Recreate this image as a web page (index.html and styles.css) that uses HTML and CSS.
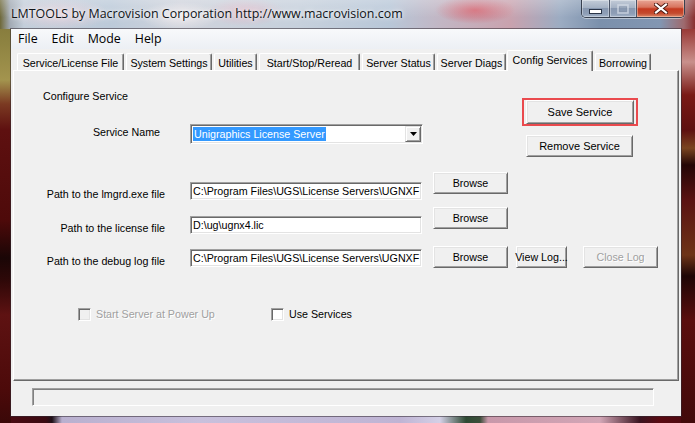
FILE: index.html
```html
<!DOCTYPE html>
<html>
<head>
<meta charset="utf-8">
<title>LMTOOLS</title>
<link rel="stylesheet" href="styles.css">
</head>
<body>
<div class="window">
  <div class="titlebar">
    <span class="title">LMTOOLS by Macrovision Corporation http://www.macrovision.com</span>
    <div class="caption-buttons">
      <span class="cbtn cbtn-min"><svg width="13" height="5" viewBox="0 0 13 5"><rect x="0.5" y="0.5" width="12" height="4" fill="#ffffff" stroke="#2b3548" stroke-width="1"/></svg></span>
      <span class="cbtn cbtn-max"><svg width="12" height="10" viewBox="0 0 12 10"><rect x="1" y="1" width="10" height="8" fill="none" stroke="#d9e0ea" stroke-width="1.6" opacity="0.7"/><rect x="2.5" y="3" width="7" height="4.5" fill="none" stroke="#8593a8" stroke-width="1" opacity="0.7"/></svg></span>
      <span class="cbtn cbtn-close"><svg width="14" height="11" viewBox="0 0 14 11"><path d="M2 1.5 L12 9.5 M12 1.5 L2 9.5" stroke="#4a1810" stroke-width="4" stroke-linecap="square"/><path d="M2 1.5 L12 9.5 M12 1.5 L2 9.5" stroke="#ffffff" stroke-width="2.2" stroke-linecap="square"/></svg></span>
    </div>
  </div>
  <div class="client">
    <div class="menubar">
      <span class="menu-item">File</span>
      <span class="menu-item">Edit</span>
      <span class="menu-item">Mode</span>
      <span class="menu-item">Help</span>
    </div>
    <div class="tabstrip">
      <span class="tab tab-1">Service/License File</span>
      <span class="tab tab-2">System Settings</span>
      <span class="tab tab-3">Utilities</span>
      <span class="tab tab-4">Start/Stop/Reread</span>
      <span class="tab tab-5">Server Status</span>
      <span class="tab tab-6">Server Diags</span>
      <span class="tab tab-7 tab-selected">Config Services</span>
      <span class="tab tab-8">Borrowing</span>
    </div>
    <div class="panel">
      <div class="top-section">
        <div class="top-left">
          <div class="section-title">Configure Service</div>
          <div class="field-row row-service">
            <span class="field-label label-service">Service Name</span>
            <div class="combo">
              <span class="combo-value">Unigraphics License Server</span>
              <span class="combo-btn"><svg width="7" height="4" viewBox="0 0 7 4"><path d="M0 0 H7 L3.5 4 Z" fill="#000"/></svg></span>
            </div>
          </div>
        </div>
        <div class="top-right">
          <div class="focus-ring"><span class="btn btn-save">Save Service</span></div>
          <span class="btn btn-remove">Remove Service</span>
        </div>
      </div>

      <div class="path-row row-lmgrd">
        <div class="field-row field-lmgrd">
          <span class="field-label">Path to the lmgrd.exe file</span>
          <div class="textbox">C:\Program Files\UGS\License Servers\UGNXF</div>
        </div>
        <span class="btn btn-browse">Browse</span>
      </div>

      <div class="path-row row-license">
        <div class="field-row field-license">
          <span class="field-label">Path to the license file</span>
          <div class="textbox">D:\ug\ugnx4.lic</div>
        </div>
        <span class="btn btn-browse">Browse</span>
      </div>

      <div class="path-row row-debug">
        <div class="field-row field-debug">
          <span class="field-label">Path to the debug log file</span>
          <div class="textbox">C:\Program Files\UGS\License Servers\UGNXF</div>
        </div>
        <span class="btn btn-browse">Browse</span>
        <span class="btn btn-viewlog">View Log...</span>
        <span class="btn btn-closelog btn-disabled">Close Log</span>
      </div>

      <div class="check-row">
        <span class="check-item check-disabled"><span class="checkbox"></span><span class="check-text">Start Server at Power Up</span></span>
        <span class="check-item"><span class="checkbox"></span><span class="check-text">Use Services</span></span>
      </div>
    </div>
    <div class="statusbar"></div>
  </div>
</div>
</body>
</html>
```

FILE: styles.css
```css
* { box-sizing: border-box; }
html, body { margin: 0; padding: 0; }
body {
  width: 695px;
  height: 423px;
  overflow: hidden;
  background: #3e0a0c;
  font-family: "Liberation Sans", Arial, sans-serif;
  font-size: 10.7px;
  color: #000;
}

.window {
  width: 695px;
  height: 423px;
  display: flex;
  flex-direction: column;
  padding: 0 14px 7px 11px;
  background:
    linear-gradient(to bottom, #7a7036 0px, #8f8442 45px, #a3944e 80px, #7b3a22 104px, #5e1010 130px, #4e0a0a 220px, #1a0606 258px, #2e0808 280px, #5e1212 315px, #4c0a0a 390px, #3a0808 423px) left top / 11px 423px no-repeat,
    linear-gradient(to bottom, #b06a66 0px, #9a3c38 30px, #c9908c 62px, #7a1a16 95px, #5e1010 130px, #7a4420 148px, #240606 165px, #5a1212 200px, #6e3418 255px, #1e0606 276px, #5a0e0e 320px, #420a0a 423px) right top / 14px 423px no-repeat,
    linear-gradient(to right, #4e0a12 0px, #3a0a12 46px, #1e1018 52px, #b9b0cf 62px, #c8c0dc 200px, #bfb4d4 400px, #d4d0e6 440px, #2e4a34 466px, #3c4e3a 480px, #c898aa 488px, #d2a6b6 600px, #3a1420 640px, #5a0a12 660px, #4a0a10 695px) left bottom / 695px 7px no-repeat,
    #4a0a0c;
}

/* ---------- title bar ---------- */
.titlebar {
  height: 29px;
  flex: none;
  margin: 0 -14px 0 -11px;
  padding: 0 12px 0 11px;
  display: flex;
  justify-content: space-between;
  align-items: flex-start;
  background:
    linear-gradient(to bottom, rgba(255,255,255,0.25), rgba(255,255,255,0) 60%),
    radial-gradient(ellipse 40px 14px at 475px 10px, rgba(214,96,108,0.85), rgba(214,96,108,0)),
    radial-gradient(ellipse 50px 16px at 60px 14px, rgba(236,210,220,0.8), rgba(236,210,220,0)),
    radial-gradient(ellipse 40px 14px at 245px 12px, rgba(230,180,196,0.7), rgba(230,180,196,0)),
    radial-gradient(ellipse 40px 14px at 180px 16px, rgba(245,238,240,0.8), rgba(245,238,240,0)),
    linear-gradient(to right, #6e6838 0px, #a2aab4 10px, #c3ceda 24px, #bccad9 110px, #cfd3dc 180px, #c6d0dc 300px, #b8c7d8 390px, #c2b6c4 440px, #c9a2ae 510px, #9cacc2 560px, #7b90ac 600px, #8296b2 660px, #9e6a6e 684px, #8a3030 695px);
}
.title {
  font-family: "Open Sans", "Noto Sans", sans-serif;
  font-size: 12.45px;
  line-height: 16px;
  margin-top: 6px;
  color: #101418;
  white-space: nowrap;
  text-shadow: 0 0 6px rgba(255,255,255,0.9), 0 0 3px rgba(255,255,255,0.8);
}
.caption-buttons {
  display: flex;
  height: 18px;
  margin-right: -2px;
  border: 1px solid #37404f;
  border-top: none;
  border-radius: 0 0 5px 5px;
  overflow: hidden;
  box-shadow: 0 1px 0 rgba(255,255,255,0.45);
}
.cbtn {
  display: flex;
  align-items: center;
  justify-content: center;
  height: 100%;
}
.cbtn-min, .cbtn-max {
  width: 27px;
  border-right: 1px solid #4a5466;
  background: linear-gradient(to bottom, #c3ccd8 0%, #a5b2c4 45%, #8898b0 50%, #8e9eb6 80%, #a3b3c8 100%);
  box-shadow: inset 0 0 0 1px rgba(255,255,255,0.35);
}
.cbtn-min { width: 28px; align-items: flex-end; padding-bottom: 3px; }
.cbtn-close {
  width: 47px;
  background: linear-gradient(to bottom, #e8a596 0%, #d8745e 42%, #c53a20 52%, #c44a2e 78%, #dc8a6c 100%);
  box-shadow: inset 0 0 0 1px rgba(255,220,200,0.45);
}

/* ---------- client ---------- */
.client {
  flex: 1;
  display: flex;
  flex-direction: column;
  background: #f0f0f0;
  box-shadow: 0 0 0 1px rgba(50,40,50,0.55);
}

.menubar {
  height: 20px;
  flex: none;
  display: flex;
  align-items: center;
  background: linear-gradient(to bottom, #f8f9fb, #eceff4);
  font-family: "Open Sans", "Noto Sans", sans-serif;
  font-size: 12.4px;
  color: #000;
}
.menu-item { padding: 0 7px; line-height: 18px; }

/* ---------- tabs ---------- */
.tabstrip {
  height: 21px;
  flex: none;
  display: flex;
  align-items: flex-end;
  padding-left: 6px;
  position: relative;
  z-index: 1;
}
.tab {
  height: 17px;
  margin-right: 2px;
  display: flex;
  align-items: center;
  justify-content: center;
  white-space: nowrap;
  background: #f0f0f0;
  border-top: 1px solid #ffffff;
  border-left: 1px solid #ffffff;
  border-right: 1px solid #696969;
  border-radius: 2px 2px 0 0;
  box-shadow: inset -1px 0 0 #a0a0a0;
  padding-top: 1px;
}
.tab-1 { width: 107px; }
.tab-2 { width: 86px; }
.tab-3 { width: 43px; }
.tab-4 { width: 101px; }
.tab-5 { width: 73px; }
.tab-6 { width: 69px; margin-right: 1px; }
.tab-7 { width: 86px; }
.tab-8 { width: 56px; }
.tab-selected {
  height: 21px;
  margin-bottom: -1px;
  padding-top: 0;
  padding-bottom: 3px;
}

.panel {
  height: 311px;
  flex: none;
  margin: 0 2px 0 2px;
  background: #f0f0f0;
  border-top: 1px solid #ffffff;
  border-left: 1px solid #ffffff;
  border-right: 1px solid #696969;
  border-bottom: 1px solid #696969;
  box-shadow: inset -1px -1px 0 #a0a0a0;
  display: flex;
  flex-direction: column;
}

.top-section { display: flex; height: 86px; flex: none; }
.top-left { width: 409px; }
.section-title { margin: 19px 0 0 29px; line-height: 13px; }

.field-row { display: flex; align-items: center; }
.row-service { margin-top: 21px; }
.field-label {
  width: 151px;
  text-align: right;
  white-space: nowrap;
  padding-top: 6px;
}
.label-service { width: 146px; padding-top: 0; padding-bottom: 4px; }

.combo {
  width: 233px;
  height: 20px;
  margin-left: 30px;
  display: flex;
  align-items: center;
  justify-content: space-between;
  background: #fff;
  border: 1px solid;
  border-color: #a0a0a0 #ffffff #ffffff #a0a0a0;
  box-shadow: inset 1px 1px 0 #696969, inset -1px -1px 0 #e3e3e3;
  padding: 1px 1px 1px 2px;
}
.combo-value {
  background: #3399ff;
  color: #fff;
  line-height: 14px;
  padding: 0 1px;
  white-space: nowrap;
}
.combo-btn {
  width: 16px;
  height: 16px;
  display: flex;
  align-items: center;
  justify-content: center;
  background: #f0f0f0;
  border: 1px solid;
  border-color: #e3e3e3 #696969 #696969 #e3e3e3;
  box-shadow: inset 1px 1px 0 #ffffff, inset -1px -1px 0 #a0a0a0;
}

.top-right { margin-left: 99px; display: flex; flex-direction: column; align-items: flex-start; }
.focus-ring {
  margin-top: 27px;
  width: 116px;
  height: 28px;
  border: 2px solid #ea4a4e;
  padding: 0 1px 0 2px;
}

.btn {
  display: flex;
  align-items: center;
  justify-content: center;
  white-space: nowrap;
  background: #f0f0f0;
  border: 1px solid;
  border-color: #ffffff #696969 #696969 #ffffff;
  box-shadow: inset 1px 1px 0 #e3e3e3, inset -1px -1px 0 #a0a0a0;
  height: 22px;
}
.btn-save { width: 108px; height: 24px; font-size: 11px; }
.btn-remove { width: 107px; margin: 9px 0 0 4px; font-size: 11px; }
.btn-browse { width: 75px; margin-left: 11px; }
.btn-viewlog { width: 51px; margin-left: 8px; }
.btn-closelog { width: 75px; margin-left: 16px; }
.btn-disabled { color: #a0a0a0; text-shadow: 1px 1px 0 #ffffff; }

.path-row { display: flex; align-items: flex-start; flex: none; }
.row-lmgrd { margin-top: 15px; }
.row-license { margin-top: 7px; }
.row-debug { margin-top: 12px; }
.field-lmgrd { margin-top: 10px; }
.field-license { margin-top: 9px; }
.field-debug { margin-top: 3px; }

.textbox {
  width: 232px;
  height: 18px;
  margin-left: 25px;
  background: #fff;
  border: 1px solid;
  border-color: #a0a0a0 #ffffff #ffffff #a0a0a0;
  box-shadow: inset 1px 1px 0 #696969, inset -1px -1px 0 #e3e3e3;
  padding: 0 0 0 2px;
  line-height: 16px;
  white-space: nowrap;
  overflow: hidden;
}

.check-row { display: flex; margin-top: 40px; align-items: center; }
.check-item { display: flex; align-items: center; }
.check-disabled { width: 193px; margin-left: 64px; color: #a0a0a0; text-shadow: 1px 1px 0 #ffffff; }
.checkbox {
  width: 13px;
  height: 13px;
  background: #fff;
  border: 1px solid;
  border-color: #a0a0a0 #ffffff #ffffff #a0a0a0;
  box-shadow: inset 1px 1px 0 #696969, inset -1px -1px 0 #e3e3e3;
  margin-right: 5px;
}
.check-disabled .checkbox { background: #f0f0f0; }
.check-text { line-height: 13px; }

.statusbar {
  width: 622px;
  height: 18px;
  margin: 7px 0 0 21px;
  border: 1px solid;
  border-color: #a0a0a0 #ffffff #ffffff #a0a0a0;
  box-shadow: inset 1px 1px 0 #808080;
  background: #f0f0f0;
}
```
